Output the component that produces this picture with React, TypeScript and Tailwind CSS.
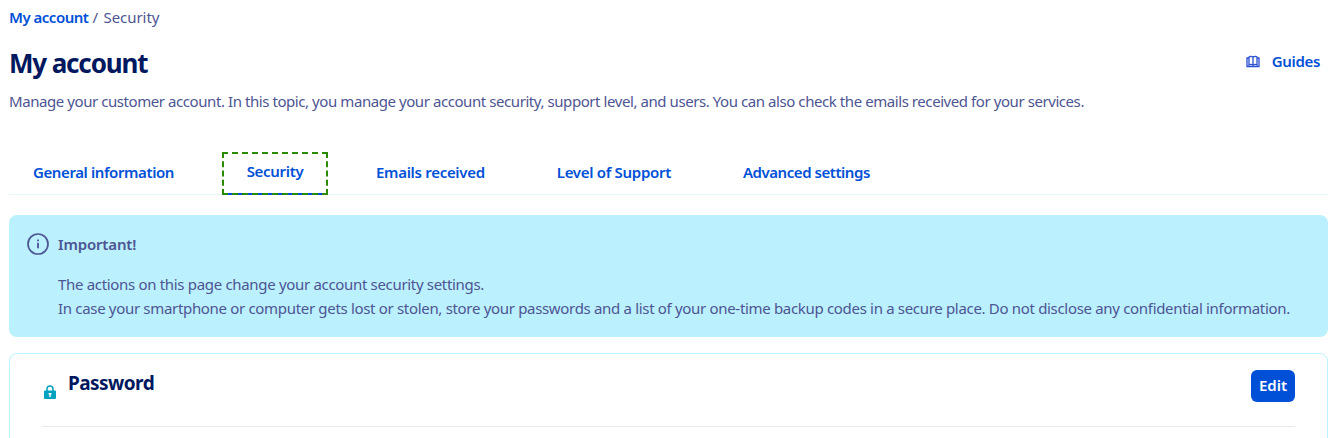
import React from 'react';

const tabs = [
  { label: 'General information', tracking: 'tracking-[-0.4px]' },
  { label: 'Security', tracking: 'tracking-[-0.3px]' },
  { label: 'Emails received', tracking: 'tracking-[-0.3px]' },
  { label: 'Level of Support', tracking: 'tracking-[-0.3px]' },
  { label: 'Advanced settings', tracking: 'tracking-[-0.45px]' },
];

const GuidesIcon = () => (
  <svg width="14" height="13" viewBox="0 0 14 13" fill="none" stroke="#2a4fd0" strokeWidth="1.300">
    <path d="M3 3H1v8.500h12V3h-2" />
    <path d="M3 10V2c1-.8 3-.8 4 .4 1-1.200 3-1.200 4-.4v8c-1-.6-3-.6-4 .4-1-1-3-1-4-.4z" />
    <path d="M7 3v7" />
  </svg>
);

const InfoIcon = () => (
  <svg width="22" height="22" viewBox="0 0 22 22" fill="none" className="shrink-0">
    <circle cx="11" cy="11" r="10" stroke="#4d5592" strokeWidth="1.700" />
    <rect x="10.100" y="9.800" width="1.800" height="5.500" fill="#4d5592" />
    <rect x="10.100" y="6.500" width="1.800" height="1.800" fill="#4d5592" />
  </svg>
);

const LockIcon = () => (
  <svg width="12" height="14" viewBox="0 0 12 14" className="shrink-0">
    <path d="M3 6V4a3 3 0 0 1 6 0v2" fill="none" stroke="#00a2bf" strokeWidth="1.500" />
    <path d="M1 5.500h10a1 1 0 0 1 1 1V13a1 1 0 0 1-1 1H1a1 1 0 0 1-1-1V6.500a1 1 0 0 1 1-1z" fill="#00a2bf" />
    <rect x="5.300" y="8.500" width="1.400" height="3.500" fill="#fff" />
    <rect x="4.500" y="8" width="3" height="1.400" fill="#fff" />
  </svg>
);

export default function App() {
  return (
    <div className="h-[438px] overflow-hidden bg-white pl-[9px] pr-[15px] font-['Noto_Sans',sans-serif] text-[15px] tracking-[-0.35px] text-[#4d5592]">
      <nav className="flex h-[34px] items-center tracking-[-0.5px]">
        <a className="font-semibold text-[#0050d7]">My account</a>
        <span className="ml-1">/</span>
        <span className="ml-[6px] tracking-[-0.05px]">Security</span>
      </nav>

      <div className="mt-[11px] flex items-start justify-between">
        <h1 className="text-[26px] leading-9 font-bold tracking-[-1.15px] text-[#00185e]">My account</h1>
        <a className="mr-2 flex h-8 items-center gap-[12px] font-semibold text-[#0050d7]">
          <GuidesIcon />
          Guides
        </a>
      </div>

      <p className="mt-2 leading-6 tracking-[-0.43px]">
        Manage your customer account. In this topic, you manage your account security, support level, and users. You can also check the emails received for your services.
      </p>

      <div className="mt-[39px] flex h-[43px] gap-6 border-b border-[#e6f3fa]">
        {tabs.map((tab) =>
          tab.label === 'Security' ? (
            <a
              key={tab.label}
              className={`flex h-[43px] w-[106px] items-center justify-center border-b-2 border-[#0050d7] pb-[2px] font-semibold text-[#0050d7] outline-2 outline-offset-[-2px] outline-[#2a8a00] outline-dashed ${tab.tracking}`}
            >
              {tab.label}
            </a>
          ) : (
            <a key={tab.label} className={`flex items-center px-6 pb-[2px] font-semibold text-[#0050d7] ${tab.tracking}`}>
              {tab.label}
            </a>
          ),
        )}
      </div>

      <div className="mt-5 rounded-lg bg-[#bbf0ff] px-[18px] pt-[18px] pb-[17px]">
        <div className="flex items-center gap-[9px]">
          <InfoIcon />
          <span className="font-semibold tracking-[-0.15px]">Important!</span>
        </div>
        <div className="mt-4 pl-[31px] leading-6 tracking-[-0.32px]">
          <p>The actions on this page change your account security settings.</p>
          <p>In case your smartphone or computer gets lost or stolen, store your passwords and a list of your one-time backup codes in a secure place. Do not disclose any confidential information.</p>
        </div>
      </div>

      <div className="mt-4 rounded-lg border border-[#bef1ff] px-8 pt-4 pb-10">
        <div className="flex items-start justify-between border-b border-[#e6e9ee] pb-6">
          <div className="flex items-start gap-3 pl-[2px]">
            <div className="pt-[15px]">
              <LockIcon />
            </div>
            <h2 className="-mt-px text-[19px] leading-7 font-bold tracking-[-0.55px] text-[#00185e]">Password</h2>
          </div>
          <button className="h-8 w-11 rounded-md bg-[#0050d7] text-[15px] font-semibold tracking-normal text-white">Edit</button>
        </div>
      </div>
    </div>
  );
}
